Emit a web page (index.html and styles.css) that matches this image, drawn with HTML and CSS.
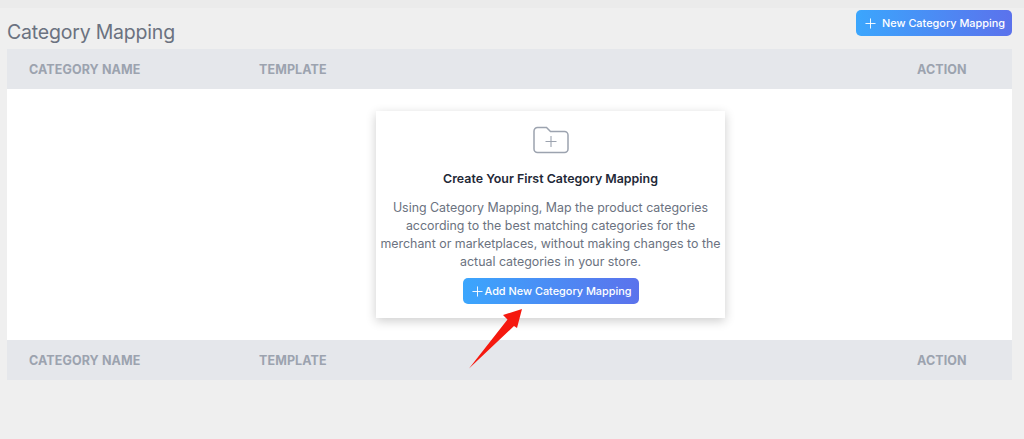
FILE: index.html
```html
<!DOCTYPE html>
<html lang="en">
<head>
<meta charset="utf-8">
<title>Category Mapping</title>
<link rel="stylesheet" href="styles.css">
</head>
<body>
<div class="topstrip"></div>
<main class="wrap">
  <header class="head">
    <h1 class="title">Category Mapping</h1>
    <button class="btn btn-top">
      <svg class="plus-top" viewBox="0 0 12 12"><path d="M6 .5v11M.5 6h11"/></svg>
      <span>New Category Mapping</span>
    </button>
  </header>
  <div class="row">
    <span class="c1">CATEGORY NAME</span><span class="c2">TEMPLATE</span><span class="c3">ACTION</span>
  </div>
  <section class="body">
    <div class="card">
      <svg class="folder" viewBox="0 0 36 28"><path d="M1 5a3.500 3.500 0 0 1 3.500-3.500h9l4 4h14a3.500 3.500 0 0 1 3.500 3.500v14a3.500 3.500 0 0 1-3.500 3.500h-27a3.500 3.500 0 0 1-3.500-3.500z"/><path class="thin" d="M18 10v11M12.500 15.500h11"/></svg>
      <h2 class="card-title">Create Your First Category Mapping</h2>
      <p class="card-text">Using Category Mapping, Map the product categories according to the best matching categories for the merchant or marketplaces, without making changes to the actual categories in your store.</p>
      <button class="btn btn-card">
        <svg class="plus-card" viewBox="0 0 12 12"><path d="M6 .5v11M.5 6h11"/></svg>
        <span>Add New Category Mapping</span>
      </button>
    </div>
    <svg class="arrow" viewBox="462 305 66 66"><path d="M469 368.500 L507.500 319.500 L503 315 L522 309 L517 328 L514 326 Z"/></svg>
  </section>
  <div class="row">
    <span class="c1">CATEGORY NAME</span><span class="c2">TEMPLATE</span><span class="c3">ACTION</span>
  </div>
</main>
</body>
</html>
```
FILE: styles.css
```css
* { box-sizing: border-box; }
html, body { margin: 0; height: 100%; }
body {
  background: #efefef;
  font-family: Inter, "Liberation Sans", sans-serif;
  overflow: hidden;
}
.topstrip { height: 8px; background: #ebebeb; }
.wrap { padding: 0 12px 0 7px; }
.head {
  height: 41px;
  display: flex;
  justify-content: space-between;
  align-items: flex-start;
}
.title {
  margin: 12px 0 0;
  font-size: 19.500px;
  line-height: 24px;
  font-weight: 400;
  color: #6b7280;
  letter-spacing: -0.2px;
}
.btn {
  border: 0;
  color: #fff;
  font-family: inherit;
  font-weight: 500;
  font-size: 10.900px;
  background: linear-gradient(90deg, #3ba6fd, #5b72ec);
  display: flex;
  align-items: center;
  padding: 0;
}
.btn svg { fill: none; stroke: #fff; stroke-width: 1; }
.btn-top {
  width: 156px;
  height: 26px;
  margin: 2px 0 0;
  border-radius: 5px;
  padding-left: 9px;
  gap: 6px;
}
.plus-top { width: 11px; height: 11px; }
.row {
  height: 40px;
  background: #e5e7eb;
  display: flex;
  align-items: center;
  font-size: 12.500px;
  font-weight: 700;
  color: #9ca3af;
  letter-spacing: 0.1px;
}
.c1 { width: 252px; padding-left: 22px; }
.c2 { flex: 1; }
.c3 { width: 95px; }
.body {
  position: relative;
  height: 251px;
  background: #fff;
  padding-top: 22px;
  display: flex;
  justify-content: center;
  align-items: flex-start;
}
.card {
  width: 349px;
  height: 207px;
  margin-left: 82px;
  padding-top: 15px;
  background: #fff;
  box-shadow: 0 3px 10px rgba(0, 0, 0, 0.2);
  display: flex;
  flex-direction: column;
  align-items: center;
  text-align: center;
}
.folder { width: 36px; height: 28px; fill: none; stroke: #9ca3af; stroke-width: 1.500; }
.folder .thin { stroke-width: 1.100; }
.card-title {
  margin: 17px 0 0;
  font-size: 12.400px;
  line-height: 16px;
  font-weight: 600;
  color: #1f2937;
}
.card-text {
  margin: 12px 0 0;
  width: 346px;
  font-size: 12.400px;
  line-height: 18px;
  font-weight: 400;
  color: #6b7280;
}
.btn-card {
  width: 176px;
  height: 26px;
  margin-top: 7px;
  border-radius: 5px;
  padding-left: 9px;
  gap: 2px;
}
.plus-card { width: 11px; height: 11px; }
.arrow {
  position: absolute;
  left: 455px;
  top: 216px;
  width: 66px;
  height: 66px;
  fill: #f5190f;
}
```
